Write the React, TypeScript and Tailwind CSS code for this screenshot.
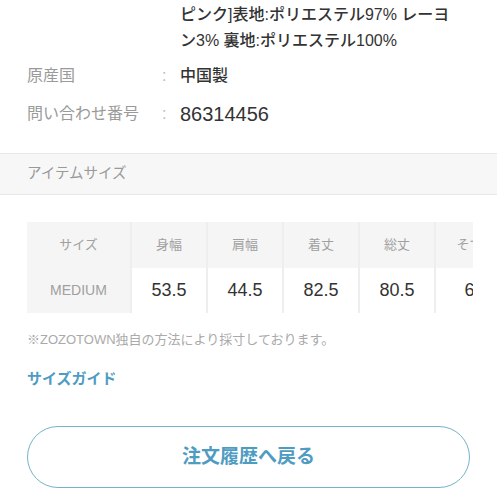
import React from "react";

const headers = ["サイズ", "身幅", "肩幅", "着丈", "総丈", "そで丈"];
const values = ["53.5", "44.5", "82.5", "80.5", "63.5"];

export default function App() {
  return (
    <div
      className="relative h-[500px] w-[500px] overflow-hidden bg-white text-[#333]"
      style={{ fontFamily: '"Liberation Sans", "Noto Sans CJK JP", sans-serif' }}
    >
      <div className="w-[497px]">
        {/* material value (continued) */}
        <div className="pl-[180px] pr-[30px] pt-[2px] text-[16px] font-medium leading-[26px]">
          <p>ピンク]表地:ポリエステル97% レーヨ</p>
          <p>ン3% 裏地:ポリエステル100%</p>
        </div>

        <div className="mt-[3px] flex h-[38px] items-center px-[27px] text-[16px]">
          <span className="w-[135px] text-[#9a9a9a]">原産国</span>
          <span className="w-[18px] text-[#bbb]">:</span>
          <span className="font-medium">中国製</span>
        </div>
        <div className="flex h-[38px] items-center px-[27px] text-[16px]">
          <span className="w-[135px] text-[#9a9a9a]">問い合わせ番号</span>
          <span className="w-[18px] text-[#bbb]">:</span>
          <span className="text-[20px] font-medium">86314456</span>
        </div>

        <div className="mt-[20px] flex h-[42px] items-center border-y border-[#e8e8e8] bg-[#f7f7f7] px-[27px] text-[14.5px] text-[#999]">
          アイテムサイズ
        </div>

        <div className="ml-[27px] mt-[27px] w-[446px] overflow-hidden">
          <div className="grid w-max grid-cols-[103px_repeat(4,74px)_80px] gap-x-[2px] bg-[#eeeeee]">
            {headers.map((h) => (
              <div
                key={h}
                className="flex h-[46px] items-center justify-center bg-[#f5f5f5] text-[13px] text-[#a0a0a0]"
              >
                {h}
              </div>
            ))}
            <div className="flex h-[45px] items-center justify-center bg-[#f5f5f5] text-[14px] text-[#a0a0a0]">
              MEDIUM
            </div>
            {values.map((v, i) => (
              <div
                key={i}
                className={`flex h-[45px] items-center justify-center bg-white text-[18px] text-[#333] ${
                  i === values.length - 1 ? "pl-[12px]" : ""
                }`}
              >
                {v}
              </div>
            ))}
          </div>
        </div>

        <p className="mt-[17px] px-[27px] text-[13px] text-[#aaa]">
          ※ZOZOTOWN独自の方法により採寸しております。
        </p>

        <p className="mt-[18px] px-[27px] text-[15px] font-bold text-[#4f9cc2]">サイズガイド</p>

        <div className="mx-[27px] mt-[36px] flex h-[62px] items-center justify-center rounded-full border border-[#74b3ca] text-[19px] font-bold text-[#4f9cc2]">
          注文履歴へ戻る
        </div>
      </div>
    </div>
  );
}
